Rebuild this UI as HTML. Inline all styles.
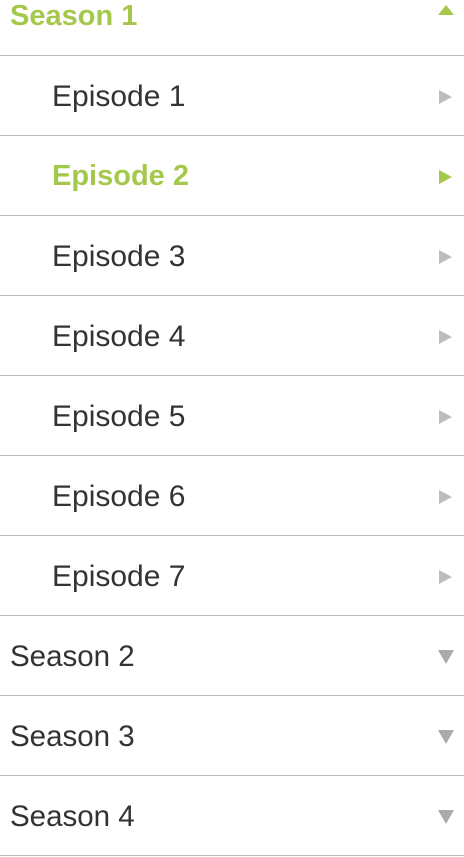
<!DOCTYPE html><html><head><style>
body{margin:0;width:464px;height:830px;overflow:hidden;background:#fff;font-family:"Liberation Sans",Arial,sans-serif;}
.wrap{position:absolute;top:-24px;left:0;width:464px}
.r{position:relative;height:79px;border-bottom:1px solid #bdbdbd;font-size:30px;color:#333;line-height:81px;}
.s{padding-left:10px;font-size:29.5px}.e{padding-left:52px}
.g{color:#a3c84a;font-weight:bold;font-size:29px}
.t{position:absolute;width:0;height:0}
.rt{right:12px;top:34px;border-left:13px solid #bdbdbd;border-top:7px solid transparent;border-bottom:7px solid transparent}
.dn{right:10px;top:34px;border-top:14px solid #aaa;border-left:8px solid transparent;border-right:8px solid transparent}
.up{right:10px;top:29px;border-bottom:10px solid #a3c84a;border-left:8px solid transparent;border-right:8px solid transparent}
</style></head><body><div class="wrap">
<div class="r s g">Season 1<div class="t up"></div></div>
<div class="r e">Episode 1<div class="t rt"></div></div>
<div class="r e g">Episode 2<div class="t rt" style="border-left-color:#a3c84a"></div></div>
<div class="r e">Episode 3<div class="t rt"></div></div>
<div class="r e">Episode 4<div class="t rt"></div></div>
<div class="r e">Episode 5<div class="t rt"></div></div>
<div class="r e">Episode 6<div class="t rt"></div></div>
<div class="r e">Episode 7<div class="t rt"></div></div>
<div class="r s">Season 2<div class="t dn"></div></div>
<div class="r s">Season 3<div class="t dn"></div></div>
<div class="r s">Season 4<div class="t dn"></div></div>
</div></body></html>
